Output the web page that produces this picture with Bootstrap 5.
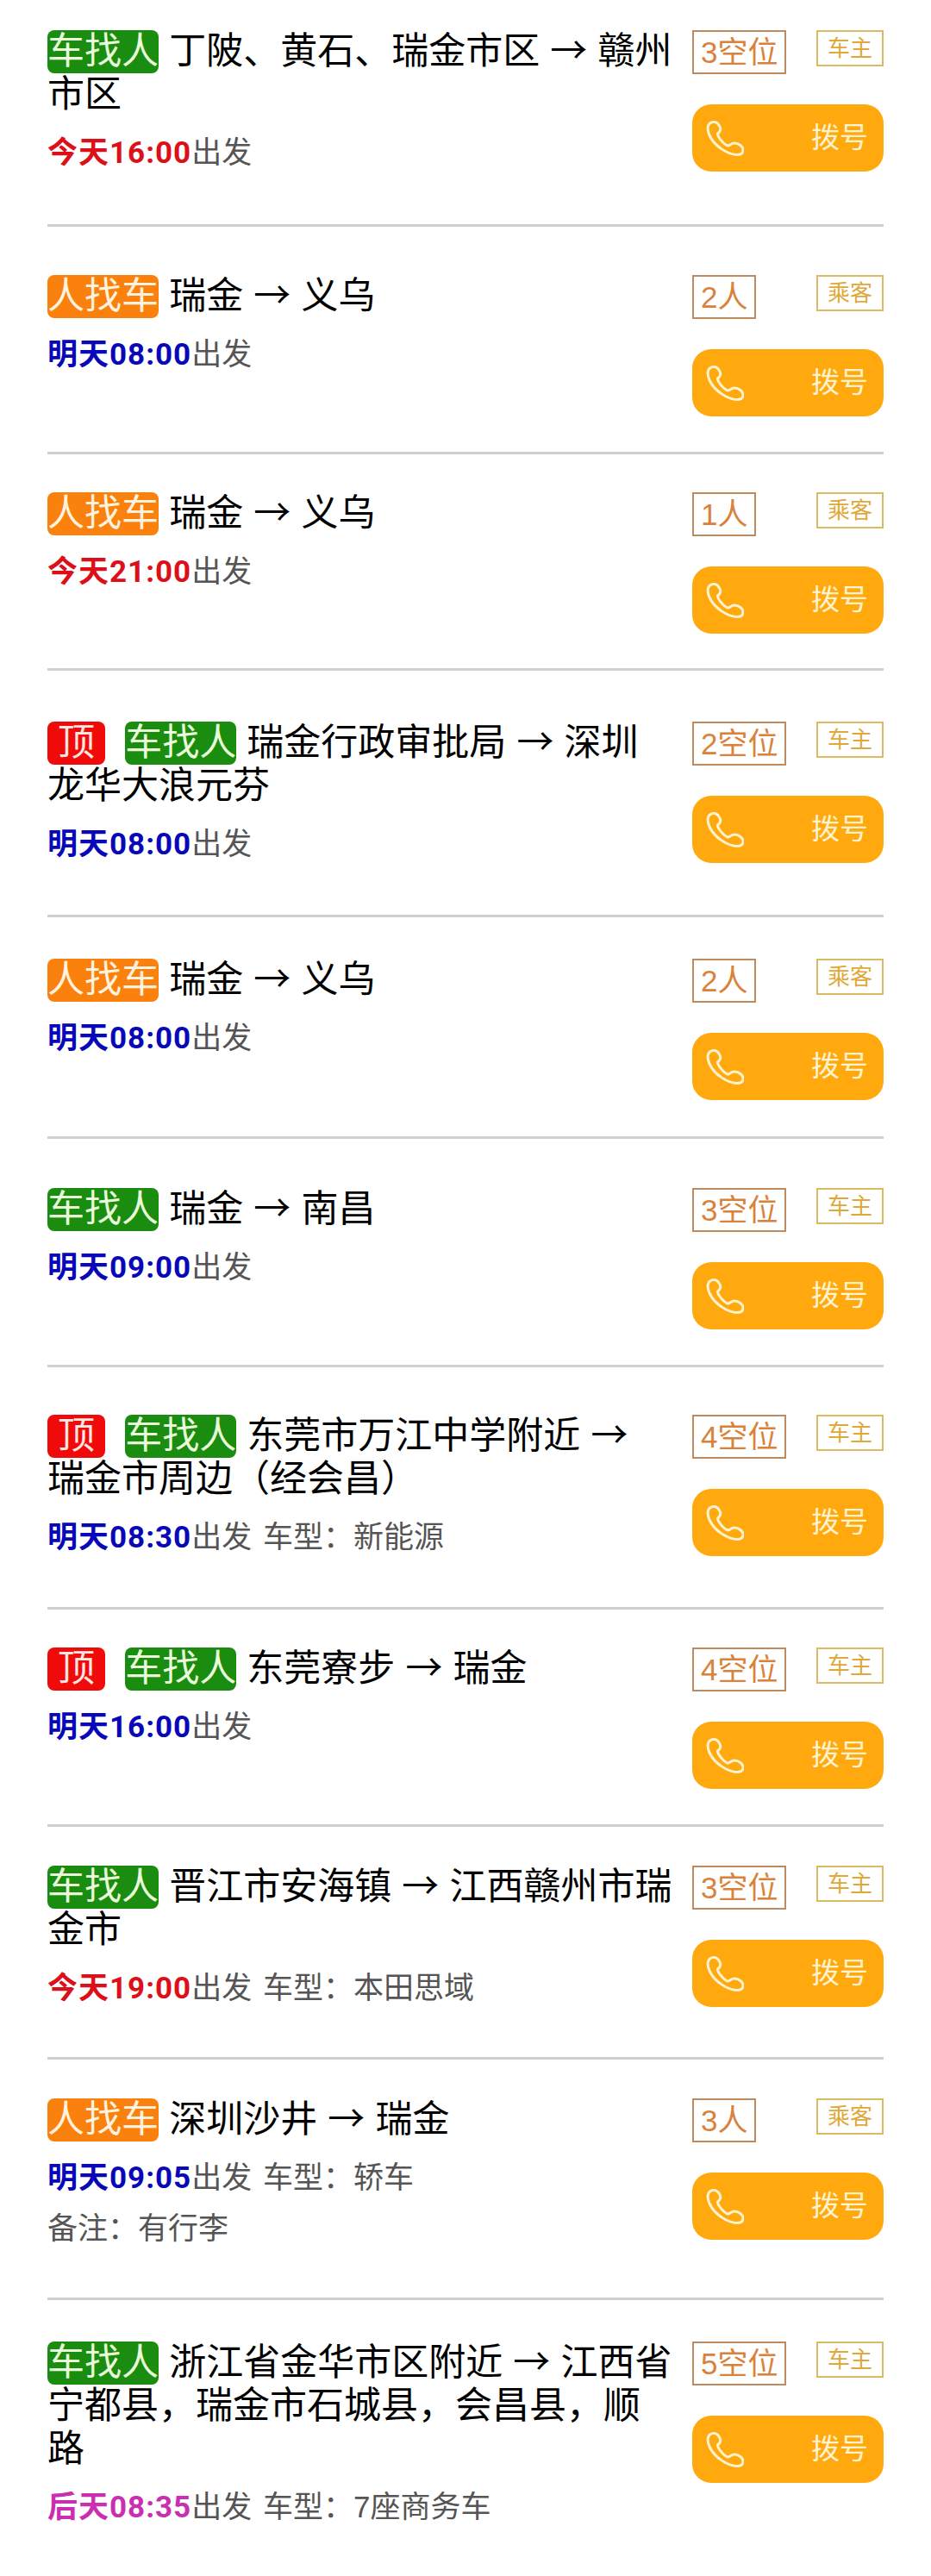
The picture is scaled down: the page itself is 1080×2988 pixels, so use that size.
<!DOCTYPE html>
<html lang="zh-CN">
<head>
  <meta charset="UTF-8">
  <meta name="viewport" content="width=device-width, initial-scale=1.0">
  <title>拼车信息</title>
  <link href="https://cdn.jsdelivr.net/npm/bootstrap@5.3.2/dist/css/bootstrap.min.css" rel="stylesheet">
  <style>
    body { background: #fff; font-family: "Liberation Sans", "Noto Sans CJK SC", sans-serif; }
    .trip-list { padding: 0 55px; }
    .trip-row { border-bottom: 3px solid #d0d0d0; box-sizing: border-box; }
    .trip-row:last-child { border-bottom: 0; }
    .trip-title { font-family: "Noto Sans CJK SC", sans-serif; font-size: 43px; line-height: 50px; word-spacing: 2.5px; color: #000; white-space: nowrap; margin: -5px 0 0; }
    .trip-tag { display: inline-block; height: 50px; line-height: 41px; margin: 5px 0 -5px; border-radius: 8px; color: #e9fbd8; padding: 0; }
    .tag-car { background: #1a8c10; }
    .tag-man { background: #fb810f; color: #fff3df; }
    .tag-top { background: #f00a0a; color: #ffe6e0; padding: 0 12px; margin-right: 11px; }
    .trip-meta { font-size: 35px; line-height: 58px; word-spacing: 3px; color: #555; margin-top: 18px; white-space: nowrap; }
    .trip-meta + .trip-meta { margin-top: 0; }
    .trip-time { font-weight: 700; letter-spacing: 1px; font-family: Roboto, "Noto Sans CJK SC", sans-serif; }
    .t-today { color: #dc1018; }
    .t-tomorrow { color: #0808b8; }
    .t-after { color: #c92fb0; }
    .trip-side { width: 222px; flex: none; }
    .seat-box { border: 2px solid #bf8a5e; color: #d9823b; font-size: 35px; line-height: 47px; height: 51px; padding: 0 8px; }
    .role-box { border: 2px solid #dcb963; color: #dfa93a; font-size: 26px; line-height: 38px; height: 42px; padding: 0 11px; }
    .dial-btn { background: #ffa90f; color: #fff3cf; border: 0; border-radius: 22px; height: 78px; margin-top: 35px; padding: 0 18px 0 16px; font-size: 33px; }
    .dial-btn:hover { background: #ffa90f; color: #fff3cf; }
    .dial-btn svg { width: 44px; height: 41px; }

    /* row heights follow the screenshot */
    .trip-row:nth-child(1) { padding-top: 35px; height: 263px; }
    .trip-row:nth-child(2) { padding-top: 56px; height: 264px; }
    .trip-row:nth-child(3) { padding-top: 44px; height: 251px; }
    .trip-row:nth-child(4) { padding-top: 59px; height: 286px; }
    .trip-row:nth-child(5) { padding-top: 48px; height: 257px; }
    .trip-row:nth-child(6) { padding-top: 57px; height: 265px; }
    .trip-row:nth-child(7) { padding-top: 55px; height: 281px; }
    .trip-row:nth-child(8) { padding-top: 44px; height: 252px; }
    .trip-row:nth-child(9) { padding-top: 45px; height: 270px; }
    .trip-row:nth-child(10) { padding-top: 45px; height: 279px; }
    .trip-row:nth-child(11) { padding-top: 48px; }
  </style>
</head>
<body>
  <div class="trip-list" id="trips"></div>

  <script>
    const phoneIcon = '<svg viewBox="0 0 44 41" fill="none" stroke="currentColor" stroke-width="3"><path d="M8 1.5C12 1 15 4 16.5 8 17.5 11 16 13 13.5 15 13 18 20 27 25 29 28 29 29 26 33 26 38 26 43 30 43 34 43 38 40 39.5 36 39.5 26 39.5 10 30 4 17 1 10 1 3 8 1.5Z"/></svg>';

    // type: car / man, top: pinned, when: today / tomorrow / after
    const trips = [
      { type: 'car', title: '丁陂、黄石、瑞金市区 → 赣州<br>市区', seats: '3空位', when: 'today', time: '今天16:00' },
      { type: 'man', title: '瑞金 → 义乌', seats: '2人', when: 'tomorrow', time: '明天08:00' },
      { type: 'man', title: '瑞金 → 义乌', seats: '1人', when: 'today', time: '今天21:00' },
      { type: 'car', top: true, title: '瑞金行政审批局 → 深圳<br>龙华大浪元芬', seats: '2空位', when: 'tomorrow', time: '明天08:00' },
      { type: 'man', title: '瑞金 → 义乌', seats: '2人', when: 'tomorrow', time: '明天08:00' },
      { type: 'car', title: '瑞金 → 南昌', seats: '3空位', when: 'tomorrow', time: '明天09:00' },
      { type: 'car', top: true, title: '东莞市万江中学附近 →<br>瑞金市周边（经会昌）', seats: '4空位', when: 'tomorrow', time: '明天08:30', extra: ' 车型：新能源' },
      { type: 'car', top: true, title: '东莞寮步 → 瑞金', seats: '4空位', when: 'tomorrow', time: '明天16:00' },
      { type: 'car', title: '晋江市安海镇 → 江西赣州市瑞<br>金市', seats: '3空位', when: 'today', time: '今天19:00', extra: ' 车型：本田思域' },
      { type: 'man', title: '深圳沙井 → 瑞金', seats: '3人', when: 'tomorrow', time: '明天09:05', extra: ' 车型：轿车', note: '备注：有行李' },
      { type: 'car', title: '浙江省金华市区附近 → 江西省<br>宁都县，瑞金市石城县，会昌县，顺<br>路', seats: '5空位', when: 'after', time: '后天08:35', extra: ' 车型：7座商务车' }
    ];

    document.getElementById('trips').innerHTML = trips.map(t => `
      <div class="trip-row d-flex justify-content-between">
        <div>
          <p class="trip-title">${t.top ? '<span class="trip-tag tag-top">顶</span> ' : ''}<span class="trip-tag tag-${t.type}">${t.type === 'car' ? '车找人' : '人找车'}</span> ${t.title}</p>
          <div class="trip-meta"><span class="trip-time t-${t.when}">${t.time}</span>出发${t.extra || ''}</div>
          ${t.note ? `<div class="trip-meta">${t.note}</div>` : ''}
        </div>
        <div class="trip-side">
          <div class="d-flex justify-content-between align-items-start">
            <span class="seat-box">${t.seats}</span>
            <span class="role-box">${t.type === 'car' ? '车主' : '乘客'}</span>
          </div>
          <button class="btn dial-btn w-100 d-flex justify-content-between align-items-center">${phoneIcon}<span>拨号</span></button>
        </div>
      </div>`).join('');
  </script>
  <script src="https://cdn.jsdelivr.net/npm/bootstrap@5.3.2/dist/js/bootstrap.bundle.min.js"></script>
</body>
</html>
